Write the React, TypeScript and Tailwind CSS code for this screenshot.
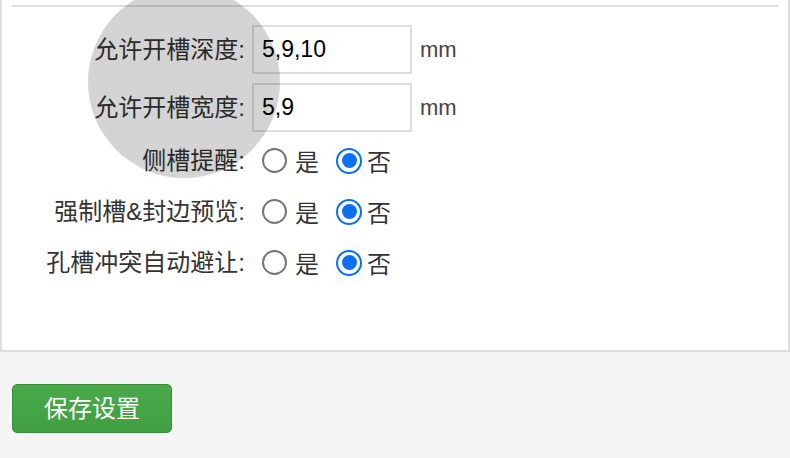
import { useState } from "react";

const font = { fontFamily: '"Liberation Sans", "Noto Sans CJK SC", sans-serif' };

function Radio({ checked }: { checked: boolean }) {
  return checked ? (
    <span className="shrink-0 w-[26px] h-[26px] rounded-full border-[2.5px] border-[#0b6ff2] flex items-center justify-center bg-white">
      <span className="block w-[15px] h-[15px] rounded-full bg-[#0b6ff2]" />
    </span>
  ) : (
    <span className="shrink-0 block w-[25px] h-[25px] rounded-full border-2 border-[#767676] bg-white" />
  );
}

export default function App() {
  const [depth, setDepth] = useState("5,9,10");
  const [width, setWidth] = useState("5,9");
  const toggles = ["侧槽提醒:", "强制槽&封边预览:", "孔槽冲突自动避让:"];

  return (
    <div className="w-[790px] h-[458px] bg-[#f5f5f5] text-[#333] overflow-hidden" style={font}>
      <div className="relative bg-white border-l-2 border-r-2 border-b-2 border-[#dedede] h-[352px] pt-[5px]">
        <div className="mx-[10px] h-[2px] bg-[#dcdcdc]" />

        <div className="mt-[18px] flex flex-col gap-[9px]">
          <div className="flex items-center h-[49px]">
            <label className="w-[243px] text-right text-[24px]">允许开槽深度:</label>
            <input
              className="ml-[7px] w-[160px] h-[49px] border-2 border-[#dedede] pl-[8px] text-[23px] text-black outline-none"
              style={font}
              value={depth}
              onChange={(e) => setDepth(e.target.value)}
            />
            <span className="ml-[8px] text-[22px] text-[#444]">mm</span>
          </div>
          <div className="flex items-center h-[49px]">
            <label className="w-[243px] text-right text-[24px]">允许开槽宽度:</label>
            <input
              className="ml-[7px] w-[160px] h-[49px] border-2 border-[#dedede] pl-[8px] text-[23px] text-black outline-none"
              style={font}
              value={width}
              onChange={(e) => setWidth(e.target.value)}
            />
            <span className="ml-[8px] text-[22px] text-[#444]">mm</span>
          </div>
        </div>

        <div className="mt-[3px] flex flex-col">
          {toggles.map((t) => (
            <div key={t} className="flex items-center h-[51px]">
              <span className="w-[243px] text-right text-[24px]">{t}</span>
              <span className="ml-[17px]"><Radio checked={false} /></span>
              <span className="ml-[8px] text-[24px] mt-[4px]">是</span>
              <span className="ml-[17px]"><Radio checked={true} /></span>
              <span className="ml-[5px] text-[24px] mt-[4px]">否</span>
            </div>
          ))}
        </div>

        {/* touch ripple */}
        <div className="absolute left-[86px] top-[-14px] w-[192px] h-[192px] rounded-full bg-black/[0.17] pointer-events-none" />
      </div>

      <button className="mt-[32px] ml-[12px] w-[160px] h-[49px] rounded-[5px] border border-[#3a8c3c] bg-gradient-to-b from-[#4aa94a] to-[#419f43] text-white text-[24px]" style={font}>
        保存设置
      </button>
    </div>
  );
}
